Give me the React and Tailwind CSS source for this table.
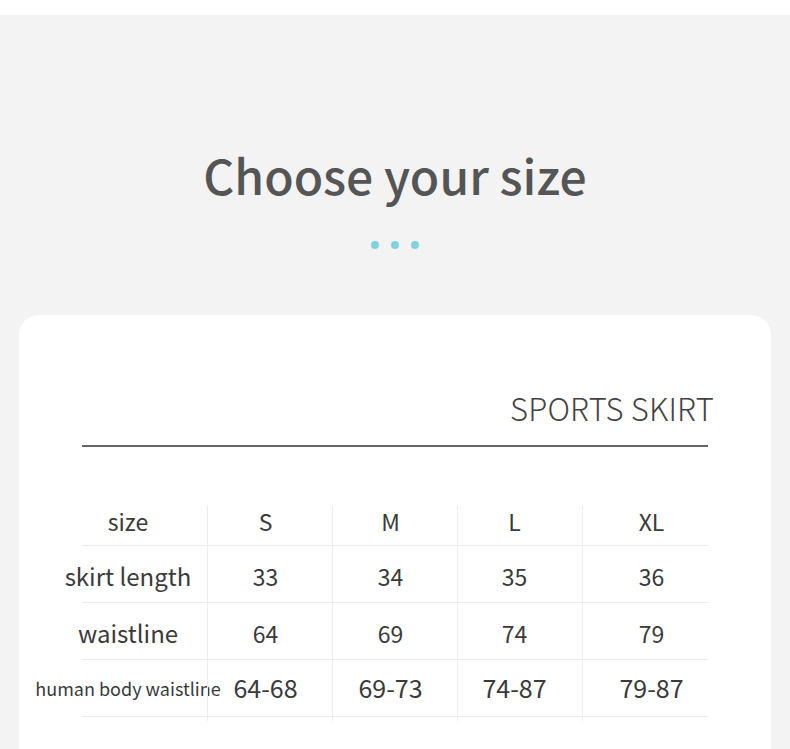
export default function App() {
  const font = "font-['Noto_Sans_CJK_SC','Noto_Sans',sans-serif]";
  const cols = [
    { w: "w-[125px]", pad: "pr-[9px]" },
    { w: "w-[125px]", pad: "pr-[9px]" },
    { w: "w-[125px]", pad: "pr-[11px]" },
    { w: "w-[126px]", pad: "pl-[12px]" },
  ];
  const rows = [
    { label: "size", vals: ["S", "M", "L", "XL"], h: "h-[40px]", lsize: "text-[23px]", vsize: "text-[23px]", lp: "pb-[9px]", vp: "pb-[9px]" },
    { label: "skirt length", vals: ["33", "34", "35", "36"], h: "h-[57px]", lsize: "text-[24px]", vsize: "text-[23px]", lp: "pt-[4px]", vp: "pt-[4px]" },
    { label: "waistline", vals: ["64", "69", "74", "79"], h: "h-[57px]", lsize: "text-[24px]", vsize: "text-[23px]", lp: "pt-[4px]", vp: "pt-[4px]" },
    { label: "human body waistline", vals: ["64-68", "69-73", "74-87", "79-87"], h: "h-[57px]", lsize: "text-[18px]", vsize: "text-[25px]", lp: "pt-[0px]", vp: "pt-[0px]" },
  ];
  return (
    <div className={`w-[790px] h-[749px] overflow-hidden bg-white ${font}`}>
      <div className="h-[15px] bg-white" />
      <div className="bg-[#f3f3f3] h-[734px] flex flex-col">
        <div className="pt-[131px] flex justify-center">
          <h1 className="text-[48px] leading-[56px] text-[#555555] font-medium">Choose your size</h1>
        </div>
        <div className="mt-[39px] flex justify-center gap-[12px]">
          <span className="w-[8px] h-[8px] rounded-full bg-[#7fd3df]" />
          <span className="w-[8px] h-[8px] rounded-full bg-[#7fd3df]" />
          <span className="w-[8px] h-[8px] rounded-full bg-[#7fd3df]" />
        </div>
        <div className="mt-[66px] ml-[19px] w-[752px] flex-1 rounded-t-[20px] bg-white">
          <div className="pt-[73px] pr-[57px] flex justify-end">
            <span className="text-[31px] leading-[40px] text-[#444444] font-light tracking-[0.2px]">SPORTS SKIRT</span>
          </div>
          <div className="mt-[17px] ml-[63px] w-[626px] h-[2px] bg-[#666666]" />
          <div className="mt-[59px] ml-[63px] w-[626px] text-[#3a3a3a]">
            {rows.map((r, i) => (
              <div key={i} className={`flex ${r.h} border-b border-[#ececec]`}>
                <div className={`w-[125px] pr-[33px] flex items-center justify-center whitespace-nowrap ${r.lsize}`}>
                  <span className={r.lp}>{r.label}</span>
                </div>
                {cols.map((c, j) => (
                  <div key={j} className={`${c.w} ${c.pad} border-l border-[#ededed] flex items-center justify-center whitespace-nowrap ${r.vsize}`}>
                    <span className={r.vp}>{r.vals[j]}</span>
                  </div>
                ))}
              </div>
            ))}
            <div className="flex h-[4px]">
              <div className="w-[125px]" />
              {cols.map((c, j) => (
                <div key={j} className={`${c.w} border-l border-[#ededed]`} />
              ))}
            </div>
          </div>
        </div>
      </div>
    </div>
  );
}
